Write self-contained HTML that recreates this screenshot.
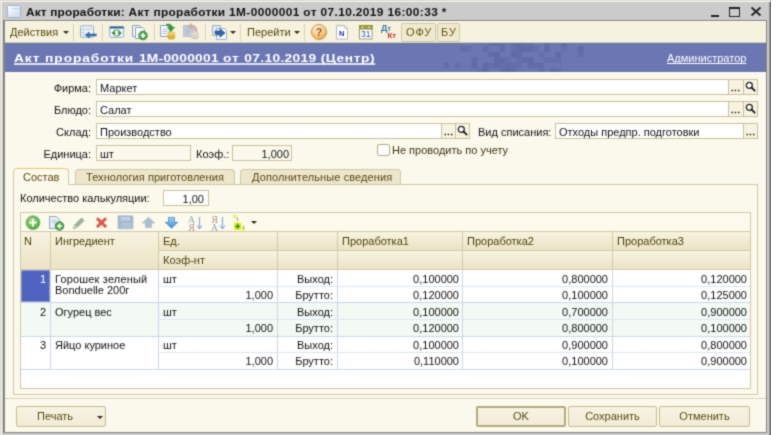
<!DOCTYPE html>
<html lang="ru"><head><meta charset="utf-8"><title>Акт проработки</title>
<style>
html,body{margin:0;padding:0;}
body{width:779px;height:435px;overflow:hidden;background:#fff;position:relative;font-family:"Liberation Sans",sans-serif;font-size:11px;color:#111;}
.a{position:absolute;}
.t{position:absolute;white-space:nowrap;line-height:14px;height:14px;}
.r{text-align:right;}
#win{left:2px;top:2px;width:769px;height:433px;background:#cbcbcb;}
#lstrip{left:0;top:0;width:1px;height:435px;background:#e0dcc6;box-shadow:1px 0 0 #f4f4f4;}
#tstrip{left:0;top:0;width:771px;height:1px;background:#e0dcc6;box-shadow:0 1px 0 #f4f4f4;}
#wr{left:769px;top:2px;width:2px;height:433px;background:#8a8a8a;}
#client{left:3px;top:20px;width:764px;height:413px;background:#fbf9ec;border:1px solid #86857c;border-left:2px solid #868686;box-sizing:border-box;}
#title{left:26px;top:5px;font-weight:bold;font-size:11px;color:#111;letter-spacing:0.3px;transform:scaleX(1.078);transform-origin:0 0;}
#tb{left:5px;top:21px;width:761px;height:22px;background:#f5f2dd;box-sizing:border-box;border-top:1px solid #fdfcf2;border-bottom:1px solid #d9d3b3;}
#hdr{left:5px;top:43px;width:761px;height:29px;background:#6b77b3;}
#hdrt{left:14px;top:51px;font-weight:bold;font-size:11.5px;color:#fff;text-decoration:underline;text-decoration-skip-ink:none;text-underline-offset:0.5px;text-decoration-thickness:1.5px;text-decoration-color:rgba(255,255,255,.8);letter-spacing:0.5px;transform:scaleX(1.195);transform-origin:0 0;}
#adm{left:667px;top:51px;color:#fff;text-decoration:underline;text-decoration-skip-ink:none;text-underline-offset:0.5px;font-size:11px;}
.f{position:absolute;box-sizing:border-box;border:1px solid #c9c19b;background:#fff;height:16px;}
.f .t{left:3px;top:1px;}
.btn svg{position:absolute;left:0;top:0}
.btn{position:absolute;box-sizing:border-box;border:1px solid #c9c19b;background:#f6f3e1;height:16px;width:15px;}
.lbl{color:#111;}
.tab{position:absolute;box-sizing:border-box;border:1px solid #cfc8a6;border-bottom:none;border-radius:4px 4px 0 0;background:#ece6cb;height:15px;top:169px;}
.tab .t{top:0px;color:#5a4912;}
.tab.sel{background:#fbf9ec;top:168px;height:17px;border-top-color:#efc66e;}
.tab.sel .t{top:1px}
#panel{left:13px;top:184px;width:745px;height:211px;box-sizing:border-box;border:1px solid #cfc8a6;}
.hb{position:absolute;box-sizing:border-box;border-right:1px solid #d3caa6;border-bottom:1px solid #d3caa6;background:linear-gradient(#f7f3e0,#ebe3c4);}
.hb .t{left:4px;top:2px;color:#4e400e;}
.gl{position:absolute;background:#c9d8ea;}
.bb{position:absolute;box-sizing:border-box;border:1px solid #c5bc93;border-radius:2px;background:linear-gradient(#f6f3e2,#f1ecd6);height:21px;top:406px;text-align:center;color:#5a4a14;line-height:19px;}

.tbt{color:#5a4610;font-size:11px;}
.arr{position:absolute;width:0;height:0;border-left:3px solid transparent;border-right:3px solid transparent;border-top:3px solid #3a2c08;}
.sep{position:absolute;top:24px;width:1px;height:17px;background:#d6cfae;box-shadow:1px 0 0 #fbf9ea;}
.tbb{position:absolute;top:23px;height:19px;box-sizing:border-box;border:1px solid #d2caa4;border-radius:2px;background:#efe9cf;color:#6a5414;font-size:11px;line-height:17px;text-align:center;letter-spacing:0.9px;text-indent:1px;}
</style></head><body><svg width="0" height="0" style="position:absolute"><defs><filter id="soft" x="0" y="0" width="100%" height="100%" color-interpolation-filters="sRGB"><feConvolveMatrix order="3" kernelMatrix="1 3 1 3 14 3 1 3 1" divisor="30" edgeMode="duplicate" preserveAlpha="true"/></filter></defs></svg><div id="root" style="position:absolute;left:0;top:0;width:779px;height:435px;filter:url(#soft)">
<div class="a" id="win"></div>
<div class="a" id="lstrip"></div><div class="a" id="tstrip"></div><div class="a" id="wr"></div>
<div class="a" id="client"></div>
<div class="t" id="title"><span style="letter-spacing:0.16px">Акт проработки:</span> Акт проработки <span style="letter-spacing:0.365px">1М-0000001 от 07.10.2019 16:00:33 *</span></div>

<svg class="a" style="left:7px;top:5px" width="14" height="13" viewBox="0 0 14 13"><defs><linearGradient id="ig" x1="0" y1="0" x2="1" y2="1"><stop offset="0" stop-color="#ffffff"/><stop offset="1" stop-color="#c9d9e8"/></linearGradient></defs><rect x=".5" y=".5" width="13" height="12" rx="1" fill="url(#ig)" stroke="#9fb6cc"/><path d="M5 3.500h8" stroke="#c5d3e2"/></svg>
<div class="a" style="left:711px;top:15px;width:8px;height:2px;background:#222"></div>
<div class="a" style="left:729px;top:7px;width:11px;height:10px;box-sizing:border-box;border:1px solid #222;border-top-width:2px"></div>
<svg class="a" style="left:750px;top:6px" width="12" height="11" viewBox="0 0 12 11"><path d="M1.500 1.500l9 8M10.500 1.500l-9 8" stroke="#222" stroke-width="1.800"/></svg>
<div class="a" id="tb"></div>

<!-- toolbar -->
<div class="t tbt" style="left:10px;top:25px">Действия</div>
<div class="arr" style="left:63px;top:31px"></div>
<div class="sep" style="left:73px"></div>
<svg class="a" style="left:79px;top:24px" width="19" height="16" viewBox="0 0 19 16"><rect x="1.500" y="1.800" width="13" height="11.500" rx="1" fill="#f4f8fc" stroke="#8fb0d0"/><path d="M4.500 2.500v10M2 5.500h6M2 8.500h4M2 11h3" stroke="#bcd0e6" fill="none"/><rect x="7" y="3.500" width="6" height="3" fill="#d9dde2"/><path d="M17.300 10h-7V8l-4.300 3 4.300 3v-2h7z" fill="#2f73b8" stroke="#245f9e" stroke-width=".5"/></svg>
<div class="sep" style="left:102px"></div>
<svg class="a" style="left:108px;top:24px" width="17" height="16" viewBox="0 0 17 16"><rect x="1.700" y="2.800" width="14" height="10.500" rx="1" fill="#f1f7fb" stroke="#8fb0d0"/><rect x="1.700" y="2.500" width="14" height="2" fill="#2f5f95"/><path d="M3.500 9l3.500-2.800v5.600z" fill="#2e8b2e"/><path d="M13.900 9l-3.500 2.800V6.200z" fill="#2e8b2e"/><path d="M6 7.200c1-1.600 4-1.600 5.400 0M6 10.800c1 1.600 4 1.600 5.400 0" stroke="#5aa85a" stroke-width="1.200" fill="none"/></svg>
<svg class="a" style="left:131px;top:24px" width="18" height="17" viewBox="0 0 18 17"><path d="M1.500 1.500h7l2 2v9h-9z" fill="#eef3f9" stroke="#8da5c2"/><path d="M4.500 3.500h7l2 2v9h-9z" fill="#f7fafd" stroke="#8da5c2"/><circle cx="12" cy="11.500" r="4.300" fill="#4aa84a" stroke="#2e7d32" stroke-width=".8"/><path d="M12 9v5M9.500 11.500h5" stroke="#fff" stroke-width="1.600"/></svg>
<div class="sep" style="left:154px"></div>
<svg class="a" style="left:159px;top:23px" width="18" height="18" viewBox="0 0 18 18"><path d="M1.500 2.500h7l2 2v9h-9z" fill="#f1f5fa" stroke="#8da5c2"/><path d="M3.500 6.500h5M3.500 8.500h5M3.500 10.500h4" stroke="#b4c5da"/><path d="M7.500 1.200c3-.6 5.500.3 5.800 3h2.400l-3.700 4.300L8.300 4.200h2.400c-.2-1.300-1.300-2-3.200-1.700z" fill="#2f9e36" stroke="#1f7a24" stroke-width=".5"/><ellipse cx="12.300" cy="14.600" rx="3.600" ry="1.700" fill="#e8b923" stroke="#c39414" stroke-width=".5"/><ellipse cx="12.300" cy="12.600" rx="3.600" ry="1.700" fill="#f2c838" stroke="#c39414" stroke-width=".5"/><ellipse cx="12.300" cy="10.600" rx="3.600" ry="1.700" fill="#f9dc63" stroke="#c39414" stroke-width=".5"/></svg>
<svg class="a" style="left:182px;top:23px" width="18" height="18" viewBox="0 0 18 18"><path d="M1.500 2.500h10.500v11h-10.500z" fill="#bfcbdb" stroke="#b3c0d2"/><path d="M3 6.500h5M3 8.500h5M3 10.500h4" stroke="#aebccf"/><path d="M13.500 8.500c.3-2.700-1.500-4-4-4.200v1.900L5.500 3.300l4-3v1.900c3.500.2 6 2.200 5.600 6.300z" fill="#dba9a2" stroke="#cf9c95" stroke-width=".4"/><ellipse cx="12.800" cy="14.200" rx="3.700" ry="1.800" fill="#d4d0c2" stroke="#c2beaf" stroke-width=".5"/><rect x="9.100" y="10.600" width="7.400" height="3.600" fill="#d9d5c8"/><ellipse cx="12.800" cy="10.600" rx="3.700" ry="1.800" fill="#e2dfd3" stroke="#c2beaf" stroke-width=".5"/></svg>
<div class="sep" style="left:205px"></div>
<svg class="a" style="left:211px;top:24px" width="17" height="17" viewBox="0 0 17 17"><path d="M1.500 1.500h8v10h-8z" fill="#dfe8f3" stroke="#9db2cc"/><path d="M5.500 4.500h8l2 2v9h-10z" fill="#f3f7fc" stroke="#9db2cc"/><path d="M4 7h5V4.800l5 4.200-5 4.200V11H6.500c-1.500 0-2.500-1-2.500-2z" fill="#2b66b8" stroke="#1a4686" stroke-width=".6"/></svg>
<div class="arr" style="left:230px;top:31px"></div>
<div class="sep" style="left:240px"></div>
<div class="t tbt" style="left:247px;top:25px">Перейти</div>
<div class="arr" style="left:294px;top:31px"></div>
<div class="sep" style="left:304px"></div>
<svg class="a" style="left:310px;top:23px" width="18" height="18" viewBox="0 0 18 18"><defs><radialGradient id="hg" cx=".4" cy=".3" r=".8"><stop offset="0" stop-color="#fff3dc"/><stop offset=".55" stop-color="#f7c883"/><stop offset="1" stop-color="#e09a3c"/></radialGradient></defs><circle cx="9" cy="9" r="7.600" fill="url(#hg)" stroke="#c98a3a" stroke-width=".8"/><text x="9" y="13" font-family="Liberation Sans,sans-serif" font-weight="bold" font-size="10.500" text-anchor="middle" fill="#8a5a22">?</text></svg>
<svg class="a" style="left:335px;top:24px" width="15" height="17" viewBox="0 0 15 17"><path d="M1.500 1.500h8l3 3v10.500h-11z" fill="#fff" stroke="#b4b8c0"/><path d="M9.500 1.500v3h3" fill="none" stroke="#c4c8d0"/><text x="6.800" y="12" font-family="Liberation Sans,sans-serif" font-weight="bold" font-size="7.500" text-anchor="middle" fill="#2323b5">N</text></svg>
<svg class="a" style="left:359px;top:24px" width="14" height="17" viewBox="0 0 14 17"><rect x=".5" y="1.500" width="12.500" height="13.500" fill="#fff" stroke="#9a9a7a"/><rect x=".5" y="1.500" width="12.500" height="3.500" fill="#a3a53a" stroke="#8d8f2a"/><circle cx="3.500" cy="3.200" r=".8" fill="#fff"/><circle cx="10" cy="3.200" r=".8" fill="#fff"/><text x="6.800" y="13.300" font-family="Liberation Sans,sans-serif" font-size="8.500" text-anchor="middle" fill="#3344bb">31</text></svg>
<svg class="a" style="left:380px;top:23px" width="18" height="18" viewBox="0 0 18 18"><text x="1" y="8" font-family="Liberation Sans,sans-serif" font-weight="bold" font-size="9" fill="#3b78a8">Д<tspan font-size="7">т</tspan></text><text x="7.500" y="15.300" font-family="Liberation Sans,sans-serif" font-weight="bold" font-size="8" fill="#d2201c">К<tspan font-size="7">т</tspan></text></svg>
<div class="tbb" style="left:401px;width:35px">ОФУ</div>
<div class="tbb" style="left:437px;width:23px">БУ</div>
<div class="a" id="hdr"></div>
<svg class="a" style="left:438px;top:43px" width="150" height="29" viewBox="0 0 150 29"><rect x="5.6" y="19.9" width="5.600" height="5.600" fill="#5e6aa6" opacity="0.75"/><rect x="16.8" y="19.9" width="5.600" height="5.600" fill="#5e6aa6" opacity="0.55"/><rect x="22.4" y="3.1" width="5.600" height="5.600" fill="#5e6aa6" opacity="0.75"/><rect x="28.0" y="3.1" width="5.600" height="5.600" fill="#5e6aa6" opacity="0.55"/><rect x="33.6" y="14.3" width="5.600" height="5.600" fill="#5e6aa6" opacity="0.75"/><rect x="33.6" y="19.9" width="5.600" height="5.600" fill="#5e6aa6" opacity="0.95"/><rect x="39.2" y="25.5" width="5.600" height="5.600" fill="#5e6aa6" opacity="0.55"/><rect x="44.8" y="3.1" width="5.600" height="5.600" fill="#5e6aa6" opacity="0.75"/><rect x="44.8" y="19.9" width="5.600" height="5.600" fill="#5e6aa6" opacity="0.95"/><rect x="44.8" y="25.5" width="5.600" height="5.600" fill="#5e6aa6" opacity="0.95"/><rect x="50.4" y="-2.5" width="5.600" height="5.600" fill="#5e6aa6" opacity="0.55"/><rect x="50.4" y="8.7" width="5.600" height="5.600" fill="#5e6aa6" opacity="0.75"/><rect x="50.4" y="19.9" width="5.600" height="5.600" fill="#5e6aa6" opacity="0.55"/><rect x="56.0" y="-2.5" width="5.600" height="5.600" fill="#5e6aa6" opacity="0.75"/><rect x="56.0" y="8.7" width="5.600" height="5.600" fill="#5e6aa6" opacity="0.95"/><rect x="56.0" y="14.3" width="5.600" height="5.600" fill="#5e6aa6" opacity="0.95"/><rect x="56.0" y="19.9" width="5.600" height="5.600" fill="#5e6aa6" opacity="0.95"/><rect x="61.6" y="-2.5" width="5.600" height="5.600" fill="#5e6aa6" opacity="0.75"/><rect x="61.6" y="3.1" width="5.600" height="5.600" fill="#5e6aa6" opacity="0.75"/><rect x="61.6" y="14.3" width="5.600" height="5.600" fill="#5e6aa6" opacity="0.95"/><rect x="61.6" y="19.9" width="5.600" height="5.600" fill="#5e6aa6" opacity="0.55"/><rect x="61.6" y="25.5" width="5.600" height="5.600" fill="#5e6aa6" opacity="0.75"/><rect x="67.2" y="14.3" width="5.600" height="5.600" fill="#5e6aa6" opacity="0.55"/><rect x="67.2" y="19.9" width="5.600" height="5.600" fill="#5e6aa6" opacity="0.75"/><rect x="67.2" y="25.5" width="5.600" height="5.600" fill="#5e6aa6" opacity="0.95"/><rect x="72.8" y="-2.5" width="5.600" height="5.600" fill="#5e6aa6" opacity="0.75"/><rect x="72.8" y="3.1" width="5.600" height="5.600" fill="#5e6aa6" opacity="0.55"/><rect x="72.8" y="8.7" width="5.600" height="5.600" fill="#5e6aa6" opacity="0.95"/><rect x="72.8" y="19.9" width="5.600" height="5.600" fill="#5e6aa6" opacity="0.75"/><rect x="72.8" y="25.5" width="5.600" height="5.600" fill="#5e6aa6" opacity="0.75"/><rect x="78.4" y="-2.5" width="5.600" height="5.600" fill="#5e6aa6" opacity="0.95"/><rect x="78.4" y="3.1" width="5.600" height="5.600" fill="#5e6aa6" opacity="0.95"/><rect x="78.4" y="8.7" width="5.600" height="5.600" fill="#5e6aa6" opacity="0.75"/><rect x="78.4" y="14.3" width="5.600" height="5.600" fill="#5e6aa6" opacity="0.55"/><rect x="78.4" y="19.9" width="5.600" height="5.600" fill="#5e6aa6" opacity="0.55"/><rect x="84.0" y="-2.5" width="5.600" height="5.600" fill="#5e6aa6" opacity="0.55"/><rect x="84.0" y="3.1" width="5.600" height="5.600" fill="#5e6aa6" opacity="0.95"/><rect x="84.0" y="14.3" width="5.600" height="5.600" fill="#5e6aa6" opacity="0.75"/><rect x="89.6" y="-2.5" width="5.600" height="5.600" fill="#5e6aa6" opacity="0.55"/><rect x="89.6" y="3.1" width="5.600" height="5.600" fill="#5e6aa6" opacity="0.95"/><rect x="89.6" y="14.3" width="5.600" height="5.600" fill="#5e6aa6" opacity="0.95"/><rect x="89.6" y="19.9" width="5.600" height="5.600" fill="#5e6aa6" opacity="0.75"/><rect x="95.2" y="3.1" width="5.600" height="5.600" fill="#5e6aa6" opacity="0.55"/><rect x="95.2" y="19.9" width="5.600" height="5.600" fill="#5e6aa6" opacity="0.75"/><rect x="100.8" y="8.7" width="5.600" height="5.600" fill="#5e6aa6" opacity="0.55"/><rect x="100.8" y="19.9" width="5.600" height="5.600" fill="#5e6aa6" opacity="0.75"/><rect x="100.8" y="25.5" width="5.600" height="5.600" fill="#5e6aa6" opacity="0.55"/><rect x="106.4" y="-2.5" width="5.600" height="5.600" fill="#5e6aa6" opacity="0.75"/><rect x="106.4" y="3.1" width="5.600" height="5.600" fill="#5e6aa6" opacity="0.95"/><rect x="106.4" y="14.3" width="5.600" height="5.600" fill="#5e6aa6" opacity="0.55"/><rect x="112.0" y="14.3" width="5.600" height="5.600" fill="#5e6aa6" opacity="0.55"/><rect x="112.0" y="25.5" width="5.600" height="5.600" fill="#5e6aa6" opacity="0.75"/><rect x="117.6" y="8.7" width="5.600" height="5.600" fill="#5e6aa6" opacity="0.95"/><rect x="117.6" y="14.3" width="5.600" height="5.600" fill="#5e6aa6" opacity="0.55"/><rect x="117.6" y="25.5" width="5.600" height="5.600" fill="#5e6aa6" opacity="0.55"/><rect x="123.2" y="-2.5" width="5.600" height="5.600" fill="#5e6aa6" opacity="0.95"/><rect x="123.2" y="3.1" width="5.600" height="5.600" fill="#5e6aa6" opacity="0.55"/><rect x="140.0" y="3.1" width="5.600" height="5.600" fill="#5e6aa6" opacity="0.95"/><rect x="140.0" y="8.7" width="5.600" height="5.600" fill="#5e6aa6" opacity="0.75"/></svg>
<div class="t" id="hdrt"><span style="letter-spacing:0.78px">Акт проработки </span><span style="letter-spacing:0.24px">1М-0000001 </span><span style="letter-spacing:0.75px">от </span><span style="letter-spacing:0.28px">07.10.2019 </span>(Центр)</div>
<div class="t" id="adm">Администратор</div>

<!-- form fields -->
<div class="t lbl r" style="left:20px;width:71px;top:81px">Фирма:</div>
<div class="f" style="left:96px;top:79px;width:633px"><div class="t">Маркет</div></div>
<div class="btn" style="left:728px;width:16px;top:79px"><svg width="13" height="14" viewBox="0 0 13 14"><path d="M2.500 10.500h1.500M5.700 10.500h1.500M9 10.500h1.500" stroke="#222" stroke-width="1.600"/></svg></div><div class="btn" style="left:743px;top:79px"><svg width="13" height="14" viewBox="0 0 13 14"><circle cx="5.300" cy="5.300" r="3" fill="#fff" stroke="#222" stroke-width="1.300"/><path d="M7.500 7.500l3.200 3.200" stroke="#222" stroke-width="1.900" stroke-linecap="round"/></svg></div>
<div class="t lbl r" style="left:20px;width:71px;top:103px">Блюдо:</div>
<div class="f" style="left:96px;top:101px;width:633px"><div class="t">Салат</div></div>
<div class="btn" style="left:728px;width:16px;top:101px"><svg width="13" height="14" viewBox="0 0 13 14"><path d="M2.500 10.500h1.500M5.700 10.500h1.500M9 10.500h1.500" stroke="#222" stroke-width="1.600"/></svg></div><div class="btn" style="left:743px;top:101px"><svg width="13" height="14" viewBox="0 0 13 14"><circle cx="5.300" cy="5.300" r="3" fill="#fff" stroke="#222" stroke-width="1.300"/><path d="M7.500 7.500l3.200 3.200" stroke="#222" stroke-width="1.900" stroke-linecap="round"/></svg></div>
<div class="t lbl r" style="left:20px;width:71px;top:125px">Склад:</div>
<div class="f" style="left:96px;top:123px;width:346px"><div class="t">Производство</div></div>
<div class="btn" style="left:441px;top:123px"><svg width="13" height="14" viewBox="0 0 13 14"><path d="M2.500 10.500h1.500M5.700 10.500h1.500M9 10.500h1.500" stroke="#222" stroke-width="1.600"/></svg></div><div class="btn" style="left:455px;top:123px"><svg width="13" height="14" viewBox="0 0 13 14"><circle cx="5.300" cy="5.300" r="3" fill="#fff" stroke="#222" stroke-width="1.300"/><path d="M7.500 7.500l3.200 3.200" stroke="#222" stroke-width="1.900" stroke-linecap="round"/></svg></div>
<div class="t lbl" style="left:478px;top:125px">Вид списания:</div>
<div class="f" style="left:555px;top:123px;width:189px"><div class="t">Отходы предпр. подготовки</div></div>
<div class="btn" style="left:743px;top:123px"><svg width="13" height="14" viewBox="0 0 13 14"><path d="M2.500 10.500h1.500M5.700 10.500h1.500M9 10.500h1.500" stroke="#222" stroke-width="1.600"/></svg></div>
<div class="t lbl r" style="left:20px;width:71px;top:147px">Единица:</div>
<div class="f" style="left:96px;top:145px;width:95px;background:#fbf9ec"><div class="t">шт</div></div>
<div class="t lbl" style="left:196px;top:147px">Коэф.:</div>
<div class="f" style="left:232px;top:145px;width:60px;background:#fbf9ec"><div class="t r" style="left:auto;right:2px">1,000</div></div>
<div class="a" style="left:377px;top:144px;width:13px;height:12px;box-sizing:border-box;border:1px solid #b5ab84;border-radius:2px;background:#fff"></div>
<div class="t lbl" style="left:392px;top:143px;color:#3f340c">Не проводить по учету</div>

<!-- tabs -->
<div class="a" id="panel"></div>
<div class="tab sel" style="left:13px;width:56px"><div class="t" style="left:9px">Состав</div></div>
<div class="tab" style="left:75px;width:160px"><div class="t" style="left:10px;letter-spacing:0.06px">Технология приготовления</div></div>
<div class="tab" style="left:240px;width:161px"><div class="t" style="left:11px;letter-spacing:0.1px">Дополнительные сведения</div></div>

<div class="t lbl" style="left:20px;top:191px">Количество калькуляции:</div>
<div class="f" style="left:163px;top:190px;width:46px"><div class="t r" style="left:auto;right:4px">1,00</div></div>

<!-- table -->
<div class="a" id="tbl" style="left:20px;top:212px;width:731px;height:177px;box-sizing:border-box;border:1px solid #cfc8a6;background:#fff"></div>
<div class="a" style="left:21px;top:213px;width:729px;height:19px;background:#fbfaec;border-bottom:1px solid #cfc8a6;box-sizing:border-box"></div>

<!-- table toolbar icons -->
<svg class="a" style="left:25px;top:215px" width="16" height="16" viewBox="0 0 16 16"><defs><radialGradient id="gg" cx=".4" cy=".3" r=".8"><stop offset="0" stop-color="#a8dc90"/><stop offset=".6" stop-color="#6dbb58"/><stop offset="1" stop-color="#4a9a3c"/></radialGradient></defs><circle cx="8" cy="7.700" r="7" fill="url(#gg)" stroke="#8fc47c" stroke-width="1"/><circle cx="8" cy="7.700" r="6" fill="none" stroke="#4f9a3e" stroke-width=".7"/><path d="M8 4v7.400M4.300 7.700h7.400" stroke="#fff" stroke-width="1.800"/></svg>
<svg class="a" style="left:48px;top:215px" width="17" height="16" viewBox="0 0 17 16"><path d="M1.500 1.500h7l3 3v9h-10z" fill="#e6eef7" stroke="#8fa9c7"/><path d="M3.500 5.500h5M3.500 7.500h5" stroke="#b5c6da"/><circle cx="11.500" cy="11" r="4.300" fill="#4aa84a" stroke="#2e7d32" stroke-width=".8"/><path d="M11.500 8.500v5M9 11h5" stroke="#fff" stroke-width="1.600"/></svg>
<svg class="a" style="left:72px;top:216px" width="14" height="14" viewBox="0 0 14 14"><path d="M1.500 12.500l1-3.500 7-7 2.500 2.500-7 7z" fill="#9fb39a" stroke="#8aa085" stroke-width=".8"/><path d="M1.500 12.500l1-3.500 2.500 2.500z" fill="#c9d1c2"/></svg>
<svg class="a" style="left:95px;top:216px" width="13" height="13" viewBox="0 0 13 13"><path d="M2.800 3.200l7.400 7M10.200 3.200l-7.400 7" stroke="#e2554a" stroke-width="3" stroke-linecap="round"/></svg>
<svg class="a" style="left:117px;top:215px" width="17" height="15" viewBox="0 0 17 15"><rect x="1" y=".8" width="15" height="13" rx=".8" fill="#a6b7d0" stroke="#9fb1cb" stroke-width=".6"/><rect x="4" y="2" width="9" height="3.600" fill="#c3d0e2"/><rect x="4.500" y="8" width="10.500" height="5.500" fill="#b9c7db"/><path d="M6 9.500v3.500M8.500 9.500v3.500M11 9.500v3.500M13.500 9.500v3.500" stroke="#a0b1ca" stroke-width=".9"/></svg>
<svg class="a" style="left:141px;top:215px" width="15" height="15" viewBox="0 0 15 15"><path d="M7.500 2.200l6.200 5.800h-3.200v4.600h-6V8H1.300z" fill="#acbdd0" stroke="#a0b2c6" stroke-width=".6"/></svg>
<svg class="a" style="left:164px;top:215px" width="15" height="15" viewBox="0 0 15 15"><defs><linearGradient id="bg2" x1="0" y1="0" x2="0" y2="1"><stop offset="0" stop-color="#a5cef5"/><stop offset="1" stop-color="#3f8ddc"/></linearGradient></defs><path d="M7.500 13.200l6.200-5.900h-3.200V2.400h-6v4.900H1.300z" fill="url(#bg2)" stroke="#3b7cc4" stroke-width=".7"/></svg>
<svg class="a" style="left:187px;top:214px" width="17" height="18" viewBox="0 0 17 18"><text x="1" y="8.500" font-family="Liberation Serif,serif" font-size="9.500" fill="#8aa6c6">А</text><text x="1.500" y="16.500" font-family="Liberation Serif,serif" font-size="9.500" fill="#b38d8d">Я</text><path d="M12.500 3v11M10 11.500l2.500 3 2.500-3" stroke="#8badd6" stroke-width="1.150" fill="none"/></svg>
<svg class="a" style="left:210px;top:214px" width="17" height="18" viewBox="0 0 17 18"><text x="1.500" y="8.500" font-family="Liberation Serif,serif" font-size="9.500" fill="#b38d8d">Я</text><text x="1" y="16.500" font-family="Liberation Serif,serif" font-size="9.500" fill="#8aa6c6">А</text><path d="M12.500 3v11M10 11.500l2.500 3 2.500-3" stroke="#8badd6" stroke-width="1.150" fill="none"/></svg>
<svg class="a" style="left:232px;top:214px" width="17" height="18" viewBox="0 0 17 18"><rect x="1.500" y="1" width="3" height="3" fill="#f0f030"/><rect x="2" y="8.500" width="7.500" height="7.500" fill="#f2f21a"/><path d="M5.700 9.800v5M3.200 12.300h5" stroke="#27a027" stroke-width="1.800"/><rect x="10" y="14" width="3" height="2.500" fill="#f0f050"/><text x="4.500" y="7" font-family="Liberation Serif,serif" font-size="6" fill="#556">t</text><text x="11" y="15" font-family="Liberation Serif,serif" font-size="6" fill="#556">t</text></svg>
<div class="arr" style="left:251px;top:221px"></div>
<!-- header cells -->
<div class="hb" style="left:21px;top:232px;width:30px;height:38px"><div class="t" style="left:3px">N</div></div>
<div class="hb" style="left:51px;top:232px;width:108px;height:38px"><div class="t">Ингредиент</div></div>
<div class="hb" style="left:159px;top:232px;width:119px;height:19px"><div class="t">Ед.</div></div>
<div class="hb" style="left:159px;top:251px;width:119px;height:19px"><div class="t">Коэф-нт</div></div>
<div class="hb" style="left:278px;top:232px;width:60px;height:19px"></div>
<div class="hb" style="left:278px;top:251px;width:60px;height:19px"></div>
<div class="hb" style="left:338px;top:232px;width:125px;height:19px"><div class="t">Проработка1</div></div>
<div class="hb" style="left:338px;top:251px;width:125px;height:19px"></div>
<div class="hb" style="left:463px;top:232px;width:150px;height:19px"><div class="t">Проработка2</div></div>
<div class="hb" style="left:463px;top:251px;width:150px;height:19px"></div>
<div class="hb" style="left:613px;top:232px;width:137px;height:19px;border-right:none"><div class="t">Проработка3</div></div>
<div class="hb" style="left:613px;top:251px;width:137px;height:19px;border-right:none"></div>
<!-- rows -->
<div class="a" style="left:21px;top:303px;width:729px;height:33px;background:#f3f9f3"></div>
<div class="a" style="left:21px;top:270px;width:29px;height:32px;background:#4f63c0;box-sizing:border-box;border:1px dotted #c9cfee"></div>
<!-- grid lines -->
<div class="gl" style="left:50px;top:270px;width:1px;height:100px"></div>
<div class="gl" style="left:158px;top:270px;width:1px;height:100px"></div>
<div class="gl" style="left:277px;top:270px;width:1px;height:100px"></div>
<div class="gl" style="left:337px;top:270px;width:1px;height:100px"></div>
<div class="gl" style="left:462px;top:270px;width:1px;height:100px"></div>
<div class="gl" style="left:612px;top:270px;width:1px;height:100px"></div>
<div class="gl" style="left:21px;top:302px;width:729px;height:1px"></div>
<div class="gl" style="left:21px;top:336px;width:729px;height:1px"></div>
<div class="gl" style="left:21px;top:369px;width:729px;height:1px"></div>
<div class="gl" style="left:159px;top:286px;width:591px;height:1px;background:#dbe6f2"></div>
<div class="gl" style="left:159px;top:319px;width:591px;height:1px;background:#dbe6f2"></div>
<div class="gl" style="left:159px;top:352px;width:591px;height:1px;background:#dbe6f2"></div>

<!-- row text -->
<div class="t r" style="left:21px;width:25px;top:272px;color:#fff">1</div>
<div class="t" style="left:55px;top:272px;letter-spacing:0.18px">Горошек зеленый</div>
<div class="t" style="left:55px;top:283px">Bonduelle 200г</div>
<div class="t" style="left:163px;top:272px">шт</div>
<div class="t r" style="left:163px;width:110px;top:288px">1,000</div>
<div class="t r" style="left:281px;width:52px;top:272px">Выход:</div>
<div class="t r" style="left:281px;width:52px;top:288px">Брутто:</div>
<div class="t r" style="left:341px;width:118px;top:272px">0,100000</div>
<div class="t r" style="left:341px;width:118px;top:288px">0,120000</div>
<div class="t r" style="left:466px;width:142px;top:272px">0,800000</div>
<div class="t r" style="left:466px;width:142px;top:288px">0,100000</div>
<div class="t r" style="left:616px;width:131px;top:272px">0,120000</div>
<div class="t r" style="left:616px;width:131px;top:288px">0,125000</div>

<div class="t r" style="left:21px;width:25px;top:305px">2</div>
<div class="t" style="left:55px;top:305px">Огурец вес</div>
<div class="t" style="left:163px;top:305px">шт</div>
<div class="t r" style="left:163px;width:110px;top:321px">1,000</div>
<div class="t r" style="left:281px;width:52px;top:305px">Выход:</div>
<div class="t r" style="left:281px;width:52px;top:321px">Брутто:</div>
<div class="t r" style="left:341px;width:118px;top:305px">0,100000</div>
<div class="t r" style="left:341px;width:118px;top:321px">0,120000</div>
<div class="t r" style="left:466px;width:142px;top:305px">0,700000</div>
<div class="t r" style="left:466px;width:142px;top:321px">0,800000</div>
<div class="t r" style="left:616px;width:131px;top:305px">0,900000</div>
<div class="t r" style="left:616px;width:131px;top:321px">0,100000</div>

<div class="t r" style="left:21px;width:25px;top:338px">3</div>
<div class="t" style="left:55px;top:338px">Яйцо куриное</div>
<div class="t" style="left:163px;top:338px">шт</div>
<div class="t r" style="left:163px;width:110px;top:354px">1,000</div>
<div class="t r" style="left:281px;width:52px;top:338px">Выход:</div>
<div class="t r" style="left:281px;width:52px;top:354px">Брутто:</div>
<div class="t r" style="left:341px;width:118px;top:338px">0,100000</div>
<div class="t r" style="left:341px;width:118px;top:354px">0,110000</div>
<div class="t r" style="left:466px;width:142px;top:338px">0,900000</div>
<div class="t r" style="left:466px;width:142px;top:354px">0,100000</div>
<div class="t r" style="left:616px;width:131px;top:338px">0,800000</div>
<div class="t r" style="left:616px;width:131px;top:354px">0,900000</div>

<!-- bottom -->
<div class="a" style="left:5px;top:398px;width:761px;height:1px;background:#d6cfae;box-shadow:0 1px 0 #fefdf6"></div>
<div class="bb" style="left:16px;width:90px"><span style="position:absolute;left:20px">Печать</span><span class="arr" style="left:80px;top:9px"></span></div>
<div class="bb" style="left:476px;width:90px;border:2px solid #b5aa7c;line-height:17px">OK</div>
<div class="bb" style="left:568px;width:89px">Сохранить</div>
<div class="bb" style="left:659px;width:91px">Отменить</div>
</div></body></html>
